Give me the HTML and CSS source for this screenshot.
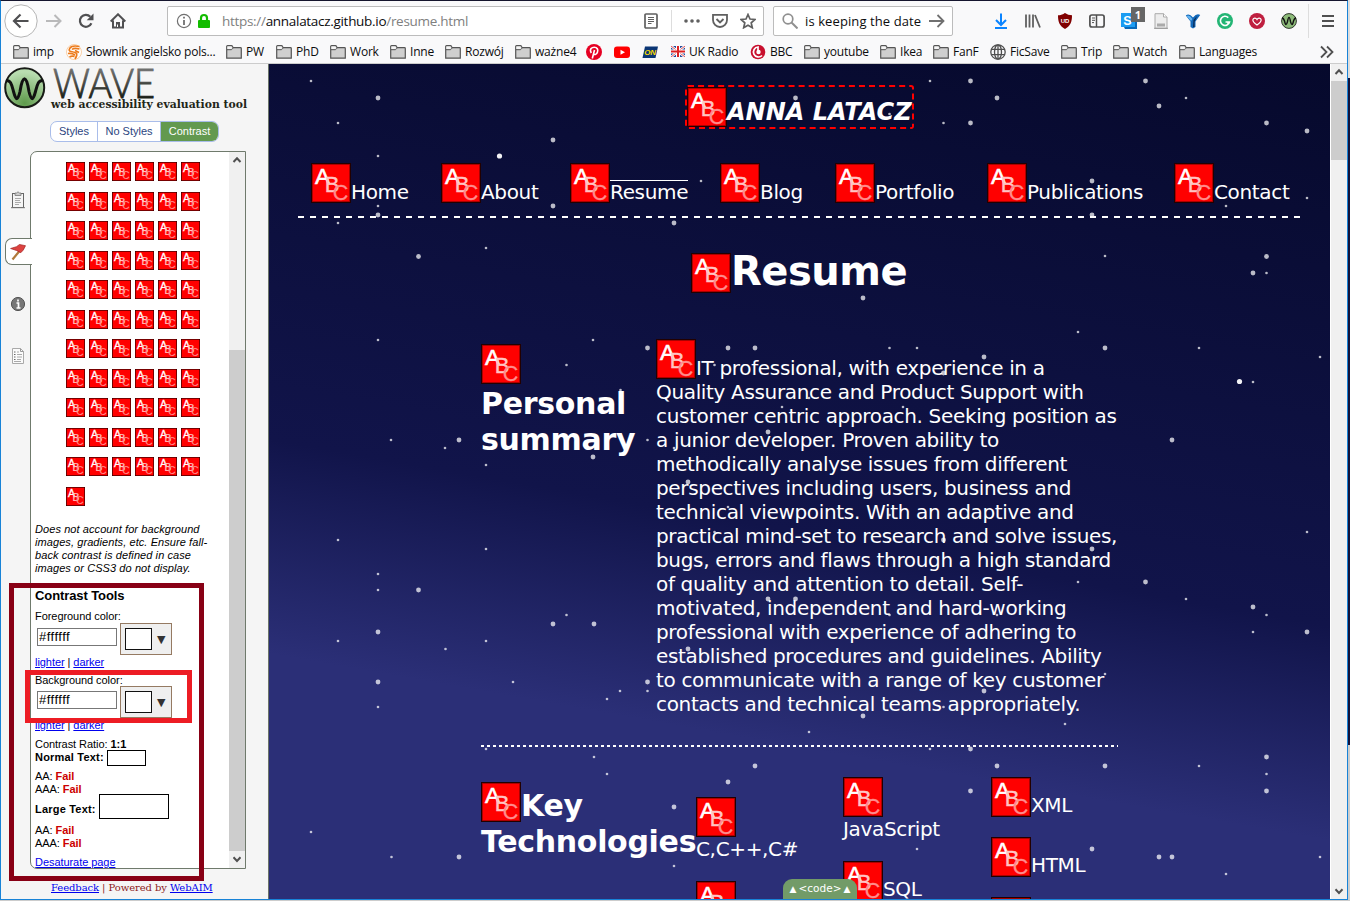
FILE: index.html
```html
<!DOCTYPE html>
<html lang="en">
<head>
<meta charset="utf-8">
<title>Resume</title>
<link rel="stylesheet" href="styles.css">
</head>
<body>
<svg width="0" height="0" class="defs">
  <symbol id="abc" viewBox="0 0 40 40">
    <rect width="40" height="40" fill="#200"/><rect x="1" y="1" width="38" height="38" fill="#900"/><rect x="1.8" y="1.8" width="36.4" height="36.4" fill="#f00"/>
    <g font-family="Liberation Sans" font-weight="400" font-style="normal" letter-spacing="0" text-anchor="middle"><text x="11.500" y="20.500" font-size="22.500" fill="#fff" stroke="#fff" stroke-width=".6">A</text><text x="21" y="29" font-size="22" fill="#ffc4c4" stroke="#ffc4c4" stroke-width=".4">B</text><text x="29.500" y="36.800" font-size="21.500" fill="#ff8c8c" stroke="#ff8c8c" stroke-width=".3">C</text></g>
  </symbol>
  <symbol id="folder" viewBox="0 0 16 14"><path d="M.7 13.2V1.5q0-.8.8-.8h4q.7 0 1 .7l.6 1.2h7.4q.8 0 .8.8v9.8z" fill="#cfcfcf" stroke="#555" stroke-width="1.2"/><path d="M1 4.7h4.5l1.5-1.5" fill="none" stroke="#555"/><path d="M1.4 3.9V1.5h4l.8 1.4-1.1 1z" fill="#f5f5f5"/></symbol>
  <symbol id="up" viewBox="0 0 16 16"><path d="M4.5 10 8 6.3l3.5 3.7" fill="none" stroke="#505050" stroke-width="2"/></symbol>
  <symbol id="down" viewBox="0 0 16 16"><path d="M4.5 6.3 8 10l3.5-3.7" fill="none" stroke="#505050" stroke-width="2"/></symbol>
</svg>
<div class="window">
  <div class="toolbar">
    <svg class="i34" viewBox="0 0 34 34"><circle cx="17" cy="17" r="16.2" fill="#fff" stroke="#b5b5b5"/><path d="M24.500 17H10M16.500 10.500 10 17l6.500 6.500" fill="none" stroke="#505052" stroke-width="2.200"/></svg>
    <svg class="i16" viewBox="0 0 16 16"><path d="M0 8h14.500M8.500 2l6 6-6 6" fill="none" stroke="#b9b9ba" stroke-width="2"/></svg>
    <svg class="i16" viewBox="0 0 16 16"><path d="M13.400 10.300A6 6 0 1 1 12.300 3.700" fill="none" stroke="#505052" stroke-width="2.200"/><path d="M15.500.5v6.800H8.700z" fill="#505052"/></svg>
    <svg class="i16" viewBox="0 0 16 16"><path d="M.7 8.500 8 1.300l7.300 7.200M3 7.500V14.500h10V7.500" fill="none" stroke="#505052" stroke-width="2"/><path d="M6 14V9h4v5z" fill="#505052"/><path d="M7.500 14v-2.500" stroke="#fff"/></svg>
    <div class="urlbar">
      <svg class="i16" viewBox="0 0 16 16"><circle cx="8" cy="8" r="6.600" fill="none" stroke="#707070" stroke-width="1.200"/><path d="M8 7v5M8 3.800v1.800" stroke="#707070" stroke-width="1.800"/></svg>
      <svg class="lock" viewBox="0 0 14 16"><rect x="1" y="7" width="12" height="8" rx="1" fill="#12bc00"/><path d="M4 8V5a3 3 0 0 1 6 0v3" fill="none" stroke="#12bc00" stroke-width="2.200"/></svg>
      <span class="url">https://<b>annalatacz.github.io</b>/resume.html</span>
      <svg class="i16" viewBox="0 0 16 16"><rect x="2" y="1" width="12" height="14" rx="1" fill="none" stroke="#606060" stroke-width="1.700"/><path d="M5 4.500h6M5 6.500h6M5 8.500h6M5 10.500h3.500" stroke="#606060"/></svg>
      <i class="sep"></i>
      <svg class="i16" viewBox="0 0 16 16" fill="#606060"><circle cx="2" cy="8" r="1.800"/><circle cx="8" cy="8" r="1.800"/><circle cx="14" cy="8" r="1.800"/></svg>
      <svg class="i16" viewBox="0 0 16 16"><path d="M1 1.800h14V7A7 7 0 0 1 1 7z" fill="none" stroke="#606060" stroke-width="1.800"/><path d="m4.500 6 3.500 3.500L11.500 6" fill="none" stroke="#606060" stroke-width="1.900"/></svg>
      <svg class="i16" viewBox="0 0 16 16"><path d="m8 1.500 2 4.500 4.900.5-3.700 3.300 1.100 4.900L8 12.200l-4.300 2.500 1.100-4.900L1.100 6.500 6 6z" fill="none" stroke="#606060" stroke-width="1.700"/></svg>
    </div>
    <div class="search">
      <svg class="i16" viewBox="0 0 16 16"><circle cx="6" cy="6" r="4.800" fill="none" stroke="#909090" stroke-width="1.700"/><path d="m9.500 9.500 6 6" stroke="#909090" stroke-width="2"/></svg>
      <span>is keeping the date</span>
      <svg class="i16" viewBox="0 0 16 16"><path d="M0 8h14.500M8.500 2l6 6-6 6" fill="none" stroke="#707070" stroke-width="1.800"/></svg>
    </div>
    <div class="tools">
      <svg viewBox="0 0 16 16"><path d="M8 .5V12M3 7l5 5 5-5M2 15h12" fill="none" stroke="#0a84ff" stroke-width="2"/></svg>
      <svg viewBox="0 0 16 16"><path d="M1 1.500v13M4.500 1.500v13M8 1.500v13M10 2l5 12.500" fill="none" stroke="#606060" stroke-width="1.800"/></svg>
      <svg viewBox="0 0 16 16"><path d="M8 0Q11 2.300 15 2.300C15 9 13.500 13 8 16 2.500 13 1 9 1 2.300 5 2.300 8 0 8 0" fill="#800000"/><text x="8" y="9.800" font-size="6" fill="#fff" font-weight="bold" text-anchor="middle" font-family="Liberation Sans">UD</text></svg>
      <svg viewBox="0 0 16 16"><rect x=".9" y="2" width="14.200" height="12" rx="2" fill="none" stroke="#505050" stroke-width="1.700"/><path d="M7.500 2v12" stroke="#505050" stroke-width="1.500"/><path d="M3 5h3M3 7.300h3M3 9.600h2" stroke="#505050"/></svg>
      <span class="badged"><svg viewBox="0 0 16 16"><path d="M0 0h14v14H0z" fill="#1b9cf2"/><path d="M3 14h11V4h2v12H4z" fill="#0969b9"/><text x="6.500" y="11.500" font-size="12.500" fill="#fff" font-weight="bold" text-anchor="middle" font-family="Liberation Sans">S</text></svg><em>1</em></span>
      <svg viewBox="0 0 16 16"><path d="M2 .7h8.500L14 4v11.300H2z" fill="#ededed" stroke="#aaa"/><path d="M10.500.7V4H14" fill="#fff" stroke="#aaa"/><path d="M1 15.300h14" stroke="#999"/><rect x="4" y="10.500" width="8" height="3" fill="#aaa"/></svg>
      <svg viewBox="0 0 16 16"><path d="M.8 2.500Q4-.5 8 4.500q4-5 7.200-2.500L10.500 8.500V14L8 15.500 5.500 14V8.500z" fill="#1268b9"/><path d="M1.500 3q3-2 6 3l-1.500 2z" fill="#64b5f2"/><path d="m8.500 7 3.500-4-2.500 6v5H8z" fill="#0a2c57"/></svg>
      <svg viewBox="0 0 16 16"><circle cx="8" cy="8" r="8" fill="#23b574"/><path d="M11.300 4.600A4.600 4.600 0 1 0 12.500 9H8.500M11 11V8.800" fill="none" stroke="#fff" stroke-width="1.600"/></svg>
      <svg viewBox="0 0 16 16"><circle cx="8" cy="8" r="8" fill="#bf1f3f"/><path d="M8 12C4 9.300 3.500 7.600 4 6.300 4.700 4.700 7 4.700 8 6.500 9 4.700 11.300 4.700 12 6.300c.5 1.300 0 3-4 5.700z" fill="none" stroke="#fff" stroke-width="1.200"/></svg>
      <svg viewBox="0 0 16 16"><circle cx="8" cy="8" r="7.400" fill="#8dbb79" stroke="#30382d"/><path d="M1 5q1.500 0 2.500 3c1 4.500 2 4.500 3 .5 1-5.500 2-5.500 3 0 1 4 2 4 3-.5 1-3 2.500-3 2.500-3" fill="none" stroke="#111" stroke-width="1.400"/></svg>
    </div>
    <i class="sep tall"></i>
    <svg class="i16" viewBox="0 0 16 16"><path d="M2 3h12M2 8h12M2 13h12" stroke="#505050" stroke-width="1.800"/></svg>
  </div>
  <div class="bookmarks">
    <span><svg class="fo"><use href="#folder"/></svg>imp</span>
    <span><svg class="i16" viewBox="0 0 16 16"><circle cx="8" cy="8" r="7.500" fill="#fff" stroke="#f9cfa6"/><path d="M13.500 2.500Q6 1 4 4t1 3.500q3 .5 5 1.500t-1 6M13.500 5Q8 3.500 6 5.500M2 9.500q4-.5 7 1.500M3.500 13q2.500-1.500 5-.5M9 6.500l4 2" fill="none" stroke="#ec7b1c" stroke-width="1.700"/></svg>Słownik angielsko pols...</span>
    <span><svg class="fo"><use href="#folder"/></svg>PW</span>
    <span><svg class="fo"><use href="#folder"/></svg>PhD</span>
    <span><svg class="fo"><use href="#folder"/></svg>Work</span>
    <span><svg class="fo"><use href="#folder"/></svg>Inne</span>
    <span><svg class="fo"><use href="#folder"/></svg>Rozwój</span>
    <span><svg class="fo"><use href="#folder"/></svg>ważne4</span>
    <span><svg class="i16" viewBox="0 0 16 16"><circle cx="8" cy="8" r="8" fill="#e60023"/><path d="M6.300 14.500 8.500 6M5.300 9C3 5 6 3.200 8.300 3.200c3 0 4 2.500 3.200 4.800-.8 3-3.500 3-4 1.500" fill="none" stroke="#fff" stroke-width="1.600"/></svg></span>
    <span><svg class="i16" viewBox="0 0 16 16"><rect y="2.500" width="16" height="11.500" rx="3" fill="#f00"/><path d="m6.500 5.700 4.500 2.500-4.500 2.500z" fill="#fff"/></svg></span>
    <span><svg class="i16" viewBox="0 0 16 16"><path d="M3 2.500h13L13.500 14H.5z" fill="#0b3674"/><text x="8" y="11.200" font-size="8" fill="#fd0" font-weight="bold" font-style="italic" text-anchor="middle" font-family="Liberation Sans">ON</text></svg></span>
    <span><svg class="flag" viewBox="0 0 14 11"><path fill="#214a9a" d="M0 0h14v11H0z"/><path d="m0 0 14 11M14 0 0 11" stroke="#fff" stroke-width="2.500"/><path d="m0 0 14 11M14 0 0 11" stroke="#d22" stroke-width=".8"/><path d="M7 0v11M0 5.500h14" stroke="#fff" stroke-width="4"/><path d="M7 0v11M0 5.500h14" stroke="#d22" stroke-width="2"/></svg>UK Radio</span>
    <span><svg class="i16" viewBox="0 0 16 16"><circle cx="8" cy="8" r="7.300" fill="#c8102e"/><path d="M12 11.500A5 5 0 1 1 8 3v5" fill="none" stroke="#fff" stroke-width="1.700"/><circle cx="8.500" cy="8" r="2.200" fill="#fff"/></svg>BBC</span>
    <span><svg class="fo"><use href="#folder"/></svg>youtube</span>
    <span><svg class="fo"><use href="#folder"/></svg>Ikea</span>
    <span><svg class="fo"><use href="#folder"/></svg>FanF</span>
    <span><svg class="i16" viewBox="0 0 16 16"><g fill="none" stroke="#505050" stroke-width="1.300"><circle cx="8" cy="8" r="7.200"/><ellipse cx="8" cy="8" rx="3.500" ry="7.200"/><path d="M1.500 5.300h13M1.500 10.700h13M8 1v14"/></g></svg>FicSave</span>
    <span><svg class="fo"><use href="#folder"/></svg>Trip</span>
    <span><svg class="fo"><use href="#folder"/></svg>Watch</span>
    <span><svg class="fo"><use href="#folder"/></svg>Languages</span>
    <span><svg class="i16" viewBox="0 0 16 16"><path d="m2 2.500 5.500 5.500L2 13.500m6-11L13.500 8 8 13.500" fill="none" stroke="#505050" stroke-width="1.800"/></svg></span>
  </div>
  <div class="content">
    <aside class="sidebar">
      <svg class="logo" width="267" height="57" viewBox="1 65 267 57">
        <defs><radialGradient id="g" cx=".5" cy=".9" r=".8"><stop offset="0" stop-color="#5e9a4b"/><stop offset="1" stop-color="#b9ddb0"/></radialGradient><linearGradient id="w" x1="0" y1="0" x2="0" y2="1"><stop offset=".2" stop-color="#777"/><stop offset=".8" stop-color="#1e221a"/></linearGradient></defs>
        <circle cx="24.700" cy="88.700" r="19.500" fill="url(#g)" stroke="#181b16" stroke-width="2"/>
        <path d="M6.500 81.500c4.500 0 5 4 7 11 2.500 9.500 4.300 9.500 6.500 0 2.500-17 6.500-17 9 0 2.200 9.500 4 9.500 6.500 0 2-7 2.500-11 7-11" fill="none" stroke="#111" stroke-width="3"/>
        <text x="53" y="98.500" font-family="Lato" font-weight="300" font-size="42" textLength="102" lengthAdjust="spacingAndGlyphs" fill="url(#w)" stroke="url(#w)" stroke-width=".9">WAVE</text>
        <text x="51" y="109" font-family="DejaVu Serif" font-weight="bold" font-size="11" textLength="196" lengthAdjust="spacingAndGlyphs" fill="#222518">web accessibility evaluation tool</text>
      </svg>
      <div class="tabs"><span>Styles</span><span>No Styles</span><span class="on">Contrast</span></div>
      <div class="panelrow">
        <div class="rail">
          <span><svg viewBox="0 0 16 18"><rect x="2.500" y="2.500" width="11" height="14" fill="#f5f5f5" stroke="#666"/><path d="M5 4.500V2h1.500L8 .8 9.500 2H11v2.500z" fill="#ccc" stroke="#777" stroke-width=".8"/><path d="M5 7.500h6M5 9.500h5M5 11.500h6M5 13.500h4" stroke="#aaa"/><path d="M1 16.700h14" stroke="#777"/></svg></span>
          <span class="active"><svg viewBox="0 0 16 18"><path d="M2.500 16.500 9.500 8" stroke="#b07a3c" stroke-width="2.200"/><path d="M.6 5.500 6.500 3.700 9.500 1.500l6 1.200-2.200 4.300-2.500 2.700L6.500 7.500z" fill="#dd4340" stroke="#a02323" stroke-width=".7"/></svg></span>
          <span><svg viewBox="0 0 16 18"><circle cx="8" cy="9" r="6.600" fill="#777" stroke="#555"/><path d="M6.500 8H8.500v5M6.500 13h4M8 4.500v2" fill="none" stroke="#fff" stroke-width="1.700"/></svg></span>
          <span><svg viewBox="0 0 16 18"><path d="M2.500 1.500h8l3 3V16.500h-11z" fill="#fbfbfb" stroke="#aaa"/><path d="M10.500 1.500v3h3" fill="none" stroke="#999"/><path d="M4 5h1.500M4 7.500h1.500M4 10h1.500M4 12.500h1.500" stroke="#666"/><path d="M7 5h2M7 7.500h5M7 10h5M7 12.500h4M4 14.500h7" stroke="#aaa"/></svg></span>
        </div>
        <div class="panel">
          <div class="panelbody">
            <div class="icons" id="icons"></div>
            <p class="note">Does not account for background<br>images, gradients, etc. Ensure fall-<br>back contrast is defined in case<br>images or CSS3 do not display.</p>
            <h3>Contrast Tools</h3>
            <div class="l13">Foreground color:</div>
            <div class="pick"><span class="field">#ffffff</span><span class="swatch"><i></i>▼</span></div>
            <div class="l13 links"><a>lighter</a> | <a>darker</a></div>
            <div class="l13 bgc">Background color:</div>
            <div class="pick"><span class="field">#ffffff</span><span class="swatch"><i></i>▼</span></div>
            <div class="l13 links"><a>lighter</a> | <a>darker</a></div>
            <div class="l13 ratio">Contrast Ratio: <b>1:1</b></div>
            <div class="sample"><b>Normal Text:</b><i class="normal"></i></div>
            <div class="l13 aa">AA: <b>Fail</b></div>
            <div class="l13 fail">AAA: <b>Fail</b></div>
            <div class="sample big"><b>Large Text:</b><i class="large"></i></div>
            <div class="l13 aa">AA: <b>Fail</b></div>
            <div class="l13 fail">AAA: <b>Fail</b></div>
            <div class="l13 desat"><a>Desaturate page</a></div>
          </div>
          <div class="sbar"><svg class="i16"><use href="#up"/></svg><i class="thumb"></i><svg class="i16"><use href="#down"/></svg></div>
        </div>
      </div>
      <div class="foot"><a>Feedback</a> | Powered by <a>WebAIM</a></div>
      <div class="mark outer"></div>
      <div class="mark inner"></div>
    </aside>
    <main class="page">
      <header><div class="name"><svg class="abc"><use href="#abc"/></svg>ANNA LATACZ</div></header>
      <nav>
        <a><svg class="abc"><use href="#abc"/></svg>Home</a><a><svg class="abc"><use href="#abc"/></svg>About</a><a><svg class="abc"><use href="#abc"/></svg><span class="cur">Resume</span></a><a><svg class="abc"><use href="#abc"/></svg>Blog</a><a><svg class="abc"><use href="#abc"/></svg>Portfolio</a><a><svg class="abc"><use href="#abc"/></svg>Publications</a><a><svg class="abc"><use href="#abc"/></svg>Contact</a>
      </nav>
      <h1><svg class="abc"><use href="#abc"/></svg>Resume</h1>
      <section class="summary">
        <h2><svg class="abc"><use href="#abc"/></svg><br>Personal<br>summary</h2>
        <p><svg class="abc"><use href="#abc"/></svg>IT professional, with experience in a<br>Quality Assurance and Product Support with<br>customer centric approach. Seeking position as<br>a junior developer. Proven ability to<br>methodically analyse issues from different<br>perspectives including users, business and<br>technical viewpoints. With an adaptive and<br>practical mind-set to research and solve issues,<br>bugs, errors and flaws through a high standard<br>of quality and attention to detail. Self-<br>motivated, independent and hard-working<br>professional with experience of adhering to<br>established procedures and guidelines. Ability<br>to communicate with a range of key customer<br>contacts and technical teams appropriately.</p>
      </section>
      <section class="tech">
        <h2><svg class="abc"><use href="#abc"/></svg>Key<br>Technologies</h2>
        <div class="col c1"><div><svg class="abc"><use href="#abc"/></svg><br>C,C++,C#</div><div><svg class="abc"><use href="#abc"/></svg></div></div>
        <div class="col c2"><div><svg class="abc"><use href="#abc"/></svg><br>JavaScript</div><div><svg class="abc"><use href="#abc"/></svg>SQL</div></div>
        <div class="col c3"><div><svg class="abc"><use href="#abc"/></svg>XML</div><div><svg class="abc"><use href="#abc"/></svg>HTML</div><div><svg class="abc"><use href="#abc"/></svg></div></div>
      </section>
      <svg class="stars" id="stars" viewBox="269 64 1078 835"></svg>
      <div class="code"><i>▲</i>&lt;code&gt;<i>▲</i></div>
    </main>
    <div class="vbar"><svg class="i16"><use href="#up"/></svg><i class="thumb"></i><svg class="i16"><use href="#down"/></svg></div>
  </div>
</div>
<script src="page.js"></script>
</body>
</html>
```
FILE: styles.css
```css
* { box-sizing: border-box; }
body { margin: 0; width: 1350px; height: 901px; overflow: hidden; font: 12px "Open Sans", sans-serif; color: #0c0c0d;
  background: linear-gradient(#ddd 78px, #10123c 78px 745px, #ccc 745px); }
.defs { position: absolute; }
svg { flex: none; display: block; }
a { color: #00e; text-decoration: underline; }
.window { width: 1348px; height: 900px; border: 1px solid #1883d7; border-top-color: #15152e; display: flex; flex-direction: column; background: #f9f9fa; }
.i16 { width: 16px; height: 16px; }
.i34 { width: 34px; height: 34px; }

.toolbar { height: 39px; flex: none; display: grid; align-items: center; padding-left: 3px;
  grid-template-columns: 42px 32px 32px 54px 606px 212px 326px 12px 16px; }
.urlbar, .search { width: 597px; height: 30px; background: #fff; border: 1px solid #bcbcbc; border-radius: 2px; display: grid; align-items: center; padding-left: 8px;
  grid-template-columns: 21px 25px 421px 28px 13px 28px 28px 16px; margin-left: 3px; margin-top: 1px; }
.search { width: 180px; grid-template-columns: 23px 124px 16px; }
.search span { font-size: 13px; letter-spacing: .1px; white-space: nowrap; }
.lock { width: 14px; height: 16px; }
.url { font-size: 13.5px; color: #808080; letter-spacing: -.3px; }
.url b { font-weight: 400; color: #0c0c0d; }
.sep { width: 1px; height: 22px; background: #ddd; }
.tall { height: 34px; }
.tools { display: grid; grid-template-columns: repeat(10, 32px); align-items: center; margin-left: 11px; }
.tools svg { width: 16px; height: 16px; }
.badged { position: relative; }
.badged em { position: absolute; left: 10px; top: -6px; width: 14px; height: 15px; background: #666; color: #fff; font: bold 11px/15px "Open Sans", sans-serif; text-align: center; }

.bookmarks { height: 24px; flex: none; display: grid; align-items: center; padding-left: 12px; border-bottom: 1px solid #ccc;
  grid-template-columns: 53px 160px 50px 54px 60px 55px 70px 71px 28px 28px 29px 79px 54px 76px 53px 57px 71px 52px 66px 140px 16px; }
.bookmarks span { display: flex; align-items: center; gap: 4px; white-space: nowrap; letter-spacing: -.2px; }
.fo { width: 16px; height: 14px; }
.flag { width: 14px; height: 11px; }

.content { flex: 1; display: flex; min-height: 0; }
.sidebar { width: 268px; flex: none; background: #f5f5f5; border-right: 1px solid #6b7468; position: relative; display: flex; flex-direction: column; font-family: "Liberation Sans", Arial, sans-serif; font-size: 11px; color: #000; }
.logo { width: 267px; height: 57px; }
.tabs { display: flex; margin-left: 49px; width: 169px; height: 21px; border: 1px solid #a9bdea; border-radius: 7px; overflow: hidden; background: #fff; color: #2a4480; line-height: 19px; text-align: center; }
.tabs span { width: 47px; border-right: 1px solid #a9bdea; }
.tabs span + span { width: 63px; }
.tabs .on { width: 57px; background: #63994f; color: #fff; border: 0; }
.panelrow { display: flex; margin-top: 9px; height: 718px; }
.rail { width: 29px; flex: none; padding: 35px 0 0 4px; display: flex; flex-direction: column; gap: 25px; }
.rail span { width: 26px; height: 27px; display: flex; align-items: center; padding-left: 4px; border: 1px solid transparent; }
.rail .active { width: 27px; background: #fff; border-color: #6f7a6c; border-right: 0; border-radius: 7px 0 0 7px; z-index: 1; }
.rail svg { width: 16px; height: 18px; }
.panel { width: 216px; height: 718px; border: 1px solid #6f7a6c; border-radius: 7px 0 0 7px; background: #fff; display: flex; overflow: hidden; }
.panelbody { width: 198px; flex: none; padding: 10px 0 0 4px; line-height: 13px; overflow: hidden; }
.icons { display: grid; grid-template-columns: repeat(6, 23px); grid-auto-rows: 29.55px; margin-left: 31px; height: 361px; }
.icons svg { width: 19px; height: 19px; }
.note { margin: 0; font-style: italic; white-space: nowrap; letter-spacing: .08px; }
h3 { margin: 13px 0 7px; font-size: 13px; line-height: 15px; letter-spacing: -.1px; }
.l13 { height: 13px; white-space: nowrap; letter-spacing: -.06px; }
.pick { display: flex; height: 32px; padding-left: 2px; gap: 3px; }
.field { width: 80px; height: 18px; margin-top: 5px; border: 1px solid #777; font-size: 13px; line-height: 16px; padding-left: 1px; letter-spacing: .5px; }
.swatch { width: 52px; height: 32px; border: 1px solid #957a62; background: #efefef; display: flex; align-items: center; padding-left: 4px; gap: 5px; font-size: 11px; color: #333; font-family: "DejaVu Sans"; }
.swatch i { width: 27px; height: 22px; border: 1px solid #111; background: #fff; }
.links { margin-top: 1px; }
.bgc { margin-top: 5px; margin-bottom: -1px; }
.ratio { margin-top: 6px; }
.sample { display: flex; height: 13px; gap: 3px; align-items: center; letter-spacing: .2px; }
.sample i { flex: none; border: 1px solid #000; background: #fff; }
.normal { width: 39px; height: 16px; }
.large { width: 70px; height: 25px; position: relative; top: -3px; }
.aa { margin-top: 6px; }
.big { margin-top: 7px; margin-bottom: 8px; }
.aa b, .fail b { color: #c00; }
.desat { margin-top: 6px; }
.sbar { width: 16px; background: #f0f0f0; display: flex; flex-direction: column; }
.sbar .thumb { height: 501px; margin-top: 182px; background: #cdcdcd; }
.foot { margin: 12px 0 0 50px; font-family: "DejaVu Serif", serif; font-size: 10px; letter-spacing: -.08px; color: #8b1a1a; white-space: nowrap; line-height: 13px; }
.mark { position: absolute; border: 5px solid #880015; }
.outer { left: 8px; top: 519px; width: 195px; height: 298px; z-index: 2; }
.inner { left: 24px; top: 606px; width: 167px; height: 53px; border-color: #ed1c24; z-index: 3; }

.page { width: 1061px; flex: none; position: relative; overflow: hidden; color: #fff; font: 20px/24px "DejaVu Sans", sans-serif; letter-spacing: -.34px; background: linear-gradient(190deg, #06092c 0%, #11144a 55%, #2b2f77 76%); }
.abc { display: inline-block; width: 40px; height: 40px; vertical-align: -4px; }
header { padding: 21px 0 0 416px; }
.name { width: 229px; height: 44px; border: 2px dashed #f00; border-radius: 3px; font: italic bold 24px/39px "DejaVu Sans", sans-serif; letter-spacing: 0; white-space: nowrap; }
.name .abc { vertical-align: -7px; }
nav { margin: 34px 0 0 29px; padding-left: 13px; width: 1004px; height: 55px; display: grid; grid-template-columns: 130px 129px 150px 115px 152px 187px 120px; white-space: nowrap;
  background: repeating-linear-gradient(90deg, #fff 0 6px, transparent 6px 12px) bottom / 100% 2px no-repeat; }
nav a { color: #fff; text-decoration: none; height: 44px; }
.cur { background: linear-gradient(#fff, #fff) top / 100% 1px no-repeat; }
h1 { margin: 29px 0 0 422px; font: bold 40px/48px "DejaVu Sans", sans-serif; letter-spacing: -.5px; white-space: nowrap; }
h1 .abc { vertical-align: -8px; }
h2 { margin: 0; font: bold 30px/36px "DejaVu Sans", sans-serif; letter-spacing: -.3px; white-space: nowrap; }
h2 .abc { vertical-align: -6px; }
.summary { margin: 49px 0 0 212px; width: 637px; height: 403px; display: grid; grid-template-columns: 175px 1fr;
  background: repeating-linear-gradient(90deg, #fff 0 3px, transparent 3px 6px) bottom / 100% 2px no-repeat; }
.summary p { margin: -5px 0 0; white-space: nowrap; }
.tech { margin-left: 212px; display: grid; grid-template-columns: 215px 147px 148px 1fr; padding-top: 30px; }
.tech h2 { padding-top: 5px; }
.col { white-space: nowrap; }
.col .abc { vertical-align: -5px; }
.c1 { padding-top: 20px; }
.c1 div, .c2 div { height: 84px; }
.c3 div { height: 60px; }
.stars { position: absolute; left: 0; top: 0; width: 1078px; height: 835px; }
.code { position: absolute; left: 514px; top: 815px; width: 74px; height: 20px; border-radius: 9px 9px 0 0; background: #729b68; font: 10.5px/19px "DejaVu Sans", sans-serif; letter-spacing: 0; display: flex; justify-content: center; gap: 2px; }
.code i { font: 9px/20px "DejaVu Sans"; }
.vbar { width: 17px; background: #f0f0f0; border-left: 1px solid #fff; display: flex; flex-direction: column; }
.vbar .thumb { height: 80px; margin: 1px 0 723px; background: #cdcdcd; }
```
FILE: page.js
```js
// Contrast error icons: eleven full rows and one extra
document.getElementById('icons').innerHTML = '<svg><use href="#abc"/></svg>'.repeat(67);

// Star field: x, y pairs by size
const sizes = {
  1.3: [311,81,338,123,378,156,701,181,378,206,338,223,486,248,930,81,1186,98,943.5,123,889.5,114,1266.5,198,1307,198,1226,206,1105,256,1266.5,273,378,340,593,340,566.5,365,714.5,365,620.5,390,809,398,782,407,391,440,445,448,647.5,440,486,465,674,448,728,507,338,540,486,549,378,574,378,590,566.5,615,714.5,532,1078,332,889.5,348,917,348,1199,348,1320,357,903,407,1253,382,889.5,515,1307,532,1078,582,1186,599,1266.5,615,997,615,889.5,615,338,641,486,641,445.5,649,513,682,647.5,691,620,691,607,699,378,707,809,732,486,749,594,757,607,774,311,832,391.5,857,674,866,1253,632,903,657,1105,674,943.5,707,1065,724,930,749,1199,766,1266.5,774,917,849,1320,857,1226,874],
  2.4: [378,98,553,140,795.5,98,378,215,553,206,674,223,418.5,256.5,970.5,81,1145.5,81,997,98,1159,106,970.5,123,1266.5,123,1307,131,1092,181,1092,215,1266.5,256.5,1253,273,863,298,647.5,348,728,348,755,348,459,440,593,457,768,432,688,482,418.5,590,768,599,795.5,599,1105,348,984,357,943.5,373,1172,440,943.5,540,1092,549,1145.5,582,1253,607,553,624,594,624,378,632,378,682,647.5,682,688,649,755,766,728,782,674,807,459,857,1307,632,984,691,863,716,970.5,749,1266.5,757,997,766,1105,766,1266.5,791,970.5,791,1092,849,1159,857,1172,857],
  2.6: [499.5,156,1239.5,381.5]
};
document.getElementById('stars').innerHTML = Object.entries(sizes).map(([r, p]) => {
  let out = '';
  for (let i = 0; i < p.length; i += 2) out += `<circle cx="${p[i]}" cy="${p[i + 1]}" r="${r}" fill="#fff" fill-opacity="${r > 2.5 ? 0.95 : 0.72}"/>`;
  return out;
}).join('');
```
